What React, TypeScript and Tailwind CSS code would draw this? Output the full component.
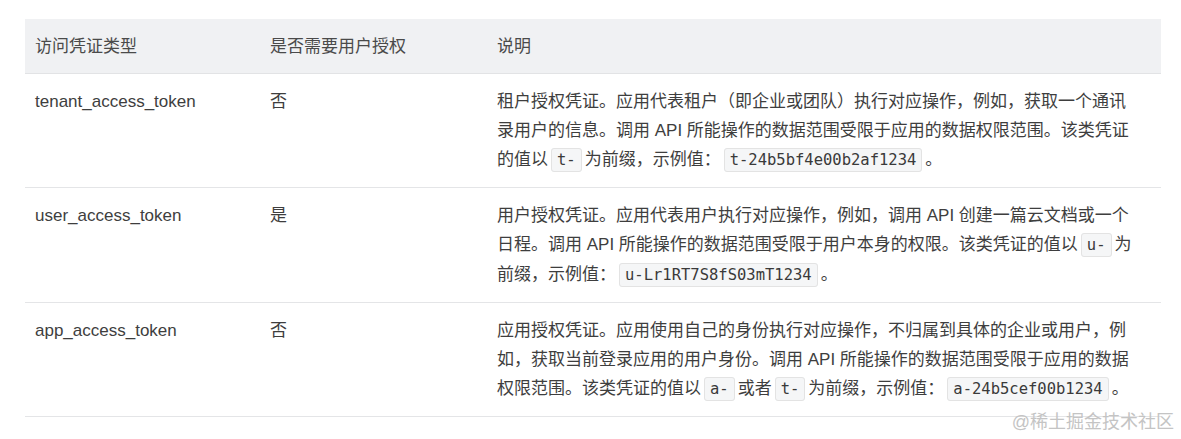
import React from "react";

const Code = ({ children }: { children: React.ReactNode }) => (
  <code className="mx-[3px] rounded-[3px] border border-[#e3e3e3] bg-[#f5f6f7] px-[5px] py-[2px] font-['DejaVu_Sans_Mono','Liberation_Mono',monospace] text-[15.5px] text-[#3a3a3a]">
    {children}
  </code>
);

const Api = () => <span className="font-['Liberation_Sans','Noto_Sans_CJK_SC',sans-serif]"> API </span>;

type Row = { name: string; auth: string; lines: React.ReactNode[] };

const rows: Row[] = [
  {
    name: "tenant_access_token",
    auth: "否",
    lines: [
      <>租户授权凭证。应用代表租户（即企业或团队）执行对应操作，例如，获取一个通讯</>,
      <>录用户的信息。调用<Api />所能操作的数据范围受限于应用的数据权限范围。该类凭证</>,
      <>
        的值以<Code>t-</Code>为前缀，示例值：<Code>t-24b5bf4e00b2af1234</Code>。
      </>,
    ],
  },
  {
    name: "user_access_token",
    auth: "是",
    lines: [
      <>用户授权凭证。应用代表用户执行对应操作，例如，调用<Api />创建一篇云文档或一个</>,
      <>
        日程。调用<Api />所能操作的数据范围受限于用户本身的权限。该类凭证的值以<Code>u-</Code>为
      </>,
      <>
        前缀，示例值：<Code>u-Lr1RT7S8fS03mT1234</Code>。
      </>,
    ],
  },
  {
    name: "app_access_token",
    auth: "否",
    lines: [
      <>应用授权凭证。应用使用自己的身份执行对应操作，不归属到具体的企业或用户，例</>,
      <>如，获取当前登录应用的用户身份。调用<Api />所能操作的数据范围受限于应用的数据</>,
      <>
        权限范围。该类凭证的值以<Code>a-</Code>或者<Code>t-</Code>为前缀，示例值：<Code>a-24b5cef00b1234</Code>。
      </>,
    ],
  },
];

export default function App() {
  return (
    <div className="relative h-[439px] w-[1181px] overflow-hidden bg-white font-['Liberation_Sans','Noto_Sans_CJK_SC',sans-serif] text-[17px] leading-[29px] text-[#3e3e3e]">
      <div className="ml-[25px] mt-[19px] w-[1136px]">
        <div className="grid grid-cols-[235px_227px_1fr] border-b border-[#e2e3e5] bg-[#f0f1f3] pb-[12px] pt-[13px] text-[#4a4a4a]">
          <div className="pl-[10px]">访问凭证类型</div>
          <div className="pl-[10px]">是否需要用户授权</div>
          <div className="pl-[10px]">说明</div>
        </div>
        {rows.map((r) => (
          <div
            key={r.name}
            className="grid grid-cols-[235px_227px_1fr] border-b border-[#e4e5e7] pb-[12px] pt-[13px]"
          >
            <div className="pl-[10px]">{r.name}</div>
            <div className="pl-[10px]">{r.auth}</div>
            <div className="pl-[10px]">
              {r.lines.map((l, i) => (
                <div key={i} className="whitespace-nowrap">
                  {l}
                </div>
              ))}
            </div>
          </div>
        ))}
      </div>
      <div className="absolute right-[7px] top-[410px] text-[18px] leading-[24px] text-[#c4c4c4]">
        @稀土掘金技术社区
      </div>
    </div>
  );
}
